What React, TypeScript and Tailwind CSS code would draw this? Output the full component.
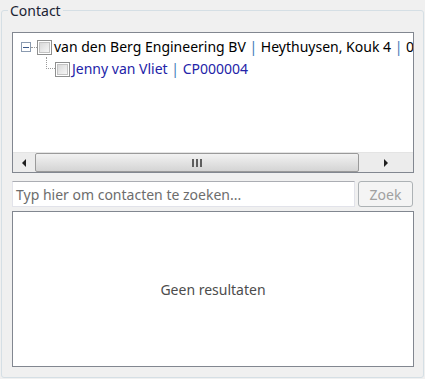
import React from "react";

const FONT = "font-['Segoe_UI','Noto_Sans',sans-serif]";

function CheckBox() {
  return (
    <span className="w-[15px] h-[15px] shrink-0 border border-[#8e8f8f] bg-white p-[1px]">
      <span className="block w-full h-full border border-[#c3c3c3] bg-gradient-to-br from-[#d9d9d9] to-[#f6f6f6]" />
    </span>
  );
}

function Arrow({ dir }: { dir: "left" | "right" }) {
  return (
    <svg width="6" height="8" viewBox="0 0 6 8" className="shrink-0">
      {dir === "left" ? (
        <path d="M5 0 L1 4 L5 8 Z" fill="#1f1f1f" />
      ) : (
        <path d="M1 0 L5 4 L1 8 Z" fill="#1f1f1f" />
      )}
    </svg>
  );
}

export default function App() {
  return (
    <div className={`w-[425px] h-[379px] bg-[#f0f0f0] pt-[10px] pl-[1px] ${FONT}`}>
      {/* Group box */}
      <div className="relative w-[423px] h-[368px] border border-[#d5dfe5] rounded-[3px] pt-[21px] pl-[10px]">
        <span className="absolute -top-[9px] left-[6px] px-[2px] bg-[#f0f0f0] text-[14px] leading-[17px] text-[#1b2433]">
          Contact
        </span>

        {/* Tree view */}
        <div className="w-[402px] h-[141px] border border-[#828790] bg-white flex flex-col">
          <div className="flex-1 overflow-hidden pt-[4px] text-[14px] leading-[20px] whitespace-nowrap">
            <div className="flex items-center h-[20px] pl-[8px]">
              <span className="w-[10px] h-[10px] shrink-0 border border-[#8b9bb0] bg-white flex items-center justify-center">
                <span className="w-[6px] h-[1px] bg-[#3c5a8a]" />
              </span>
              <span className="w-[6px] shrink-0 border-t border-dotted border-[#9a9a9a]" />
              <CheckBox />
              <span className="ml-[2px] shrink-0 text-black">
                van den Berg Engineering BV <span className="text-[#3d7ab8]">|</span> Heythuysen, Kouk 4{" "}
                <span className="text-[#3d7ab8]">|</span> 0000000
              </span>
            </div>
            <div className="flex items-end h-[20px] pl-[33px]">
              <span className="w-[9px] h-[12px] shrink-0 self-start border-l border-b border-dotted border-[#9a9a9a] mb-[9px]" />
              <CheckBox />
              <span className="ml-[2px] shrink-0 text-[#2323a8] leading-[17px]">
                Jenny van Vliet <span className="text-[#3d7ab8]">|</span> CP000004
              </span>
            </div>
          </div>

          {/* Horizontal scrollbar */}
          <div className="h-[20px] border-t border-[#e4e4e4] bg-[#ececec] flex items-center">
            <div className="w-[22px] flex justify-center">
              <Arrow dir="left" />
            </div>
            <div className="w-[324px] h-[19px] rounded-[2px] border border-[#9a9a9a] bg-gradient-to-b from-[#f2f2f2] to-[#d4d4d4] flex items-center justify-center gap-[2px]">
              <span className="w-[2px] h-[8px] bg-[#5e5e5e]" />
              <span className="w-[2px] h-[8px] bg-[#5e5e5e]" />
              <span className="w-[2px] h-[8px] bg-[#5e5e5e]" />
            </div>
            <div className="flex-1 flex justify-center">
              <Arrow dir="right" />
            </div>
          </div>
        </div>

        {/* Search row */}
        <div className="flex gap-[3px] mt-[8px] h-[26px]">
          <div className="w-[343px] border border-[#e2e3ea] border-t-[#abadb3] bg-white flex items-center pl-[3px] text-[14px] text-[#6d6d6d]">
            Typ hier om contacten te zoeken...
          </div>
          <div className="w-[55px] border border-[#adb2b5] rounded-[3px] bg-[#f4f4f4] flex items-center justify-center text-[14px] text-[#a0a0a0]">
            Zoek
          </div>
        </div>

        {/* Results */}
        <div className="w-[402px] h-[156px] mt-[4px] border border-[#828790] bg-white flex items-center justify-center text-[14px] text-[#4c4c4c]">
          Geen resultaten
        </div>
      </div>
    </div>
  );
}
